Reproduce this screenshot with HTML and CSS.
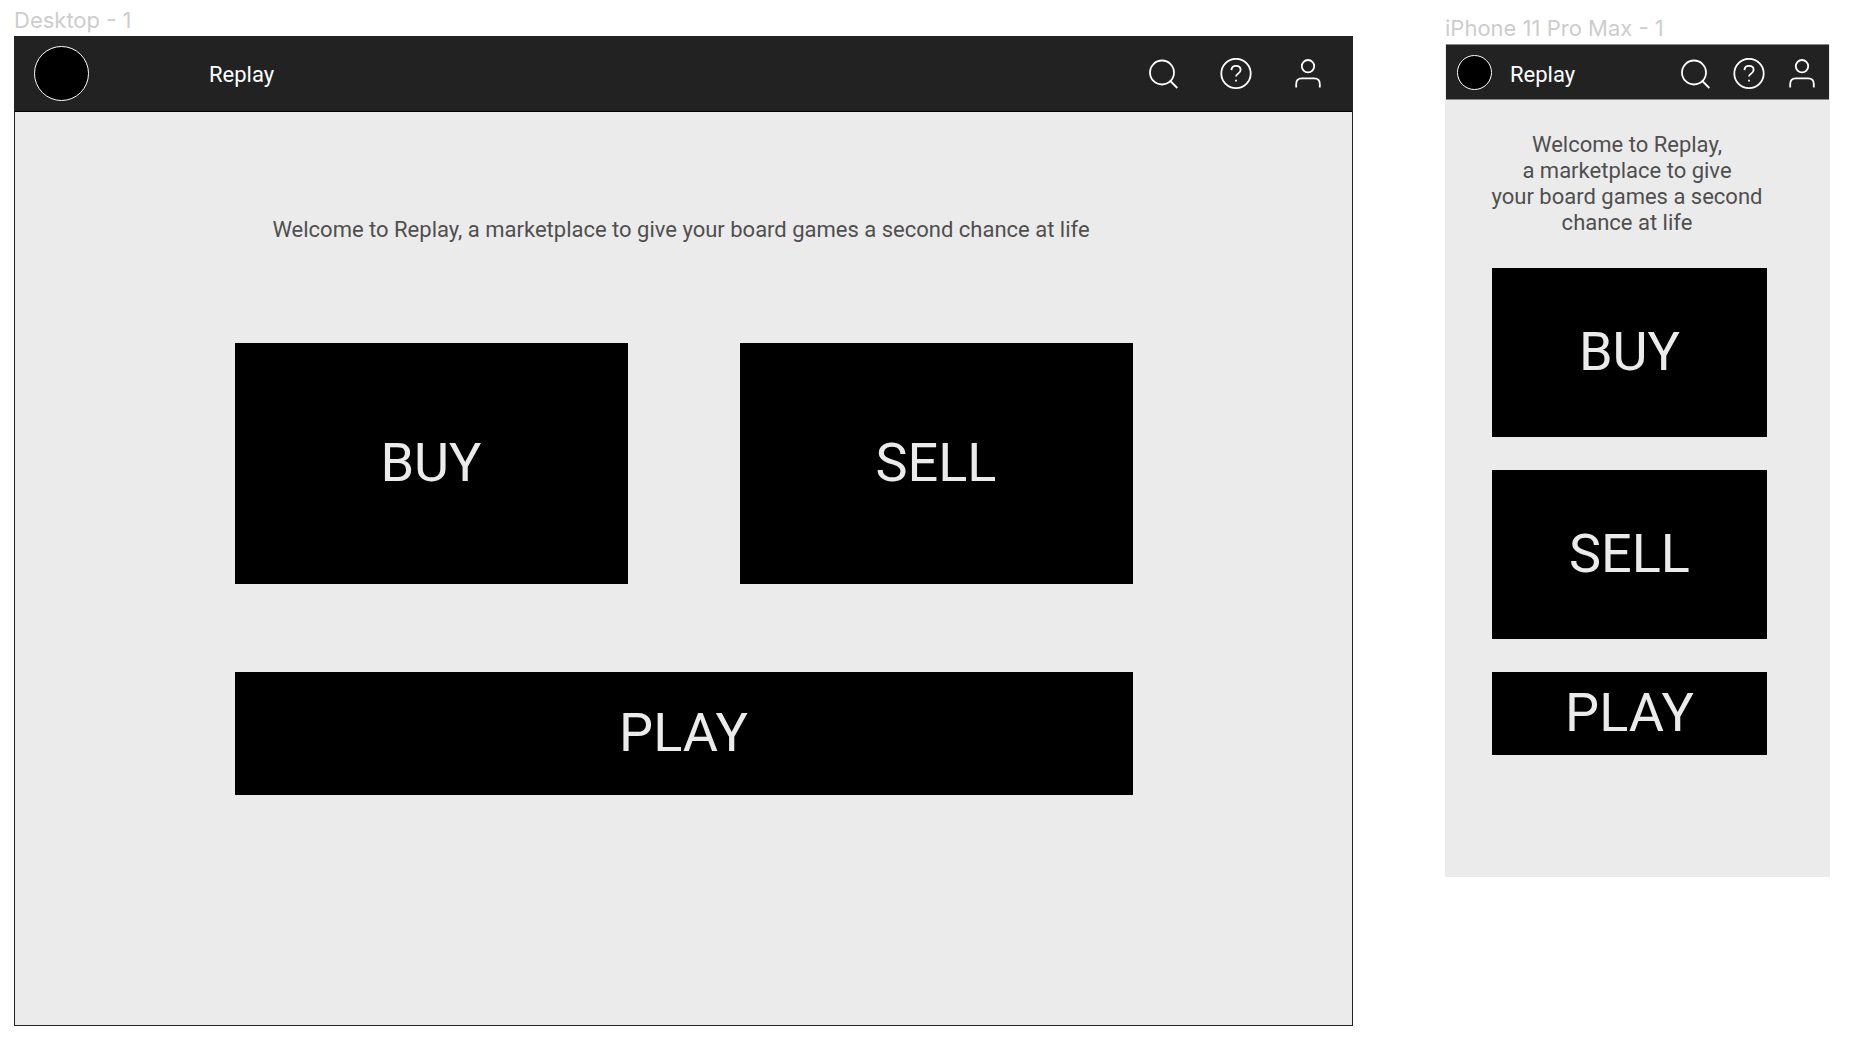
FILE: index.html
```html
<!DOCTYPE html>
<html lang="en">
<head>
<meta charset="utf-8">
<title>Replay</title>
<link rel="stylesheet" href="styles.css">
</head>
<body>
<svg class="sprite" aria-hidden="true">
  <symbol id="search" viewBox="0 0 32 32"><circle cx="14" cy="14.500" r="12"/><path d="M22.300 23l7 7"/></symbol>
  <symbol id="help" viewBox="0 0 32 32"><circle cx="16" cy="15.500" r="14.700"/><path d="M11.400 12.100c.2-2.600 2-4.200 4.600-4.200 2.700 0 4.600 1.700 4.600 4.100 0 3.600-4.600 3.600-4.600 6.600M16 21.800v1.800"/></symbol>
  <symbol id="user" viewBox="0 0 32 32"><circle cx="16" cy="8.200" r="6.200"/><path d="M4.200 29.400v-3.500c0-3.400 2-5.600 5.500-5.600h12.600c3.500 0 5.500 2.200 5.500 5.600v3.500"/></symbol>
</svg>
<div class="board">
  <section class="artboard desktop">
    <h2 class="label">Desktop - 1</h2>
    <div class="frame">
      <header class="bar">
        <span class="logo"></span>
        <span class="brand">Replay</span>
        <nav class="tools">
          <button class="tool" aria-label="Search"><svg class="icon"><use href="#search"/></svg></button>
          <button class="tool" aria-label="Help"><svg class="icon"><use href="#help"/></svg></button>
          <button class="tool" aria-label="Account"><svg class="icon"><use href="#user"/></svg></button>
        </nav>
      </header>
      <main class="content">
        <p class="welcome">Welcome to Replay, a marketplace to give your board games a second chance at life</p>
        <div class="cards">
          <button class="card">BUY</button>
          <button class="card">SELL</button>
          <button class="card play">PLAY</button>
        </div>
      </main>
    </div>
  </section>
  <section class="artboard mobile">
    <h2 class="label">iPhone 11 Pro Max - 1</h2>
    <div class="frame">
      <header class="bar">
        <span class="logo"></span>
        <span class="brand">Replay</span>
        <nav class="tools">
          <button class="tool" aria-label="Search"><svg class="icon"><use href="#search"/></svg></button>
          <button class="tool" aria-label="Help"><svg class="icon"><use href="#help"/></svg></button>
          <button class="tool" aria-label="Account"><svg class="icon"><use href="#user"/></svg></button>
        </nav>
      </header>
      <div class="content">
        <p class="welcome">Welcome to Replay,<br>a marketplace to give<br>your board games a second<br>chance at life</p>
        <div class="cards">
          <button class="card">BUY</button>
          <button class="card">SELL</button>
          <button class="card play">PLAY</button>
        </div>
      </div>
    </div>
  </section>
</div>
</body>
</html>
```
FILE: styles.css
```css
* { box-sizing: border-box; }

body {
  margin: 0;
  background: #fff;
  font-family: Roboto, sans-serif;
  font-size: 22px;
  line-height: 26px;
}

.sprite { display: none; }

.board {
  display: grid;
  grid-template-columns: 1339fr 385fr;
  gap: 92px;
  align-items: start;
  padding: 8px 32px 24px 14px;
}

.mobile { padding-top: 8px; }

.label {
  margin: 0 0 4px;
  font: 400 22px/24px Inter, sans-serif;
  color: #cdcdcd;
}

.frame { background: #ebebeb; }

.desktop .frame {
  border: 1px solid #222;
  border-top: 0;
}

.bar {
  display: flex;
  align-items: center;
  background: #222;
  color: #fff;
}

.desktop .bar {
  height: 76px;
  padding: 0 28px 0 19px;
  border-bottom: 1px solid #000;
}

.mobile .bar {
  height: 56px;
  margin: 0 1px;
  padding: 0 11px 0 11px;
  border: solid #8a8686;
  border-width: 1px 0;
}

.logo {
  width: 55px;
  height: 55px;
  border: 1px solid #fff;
  border-radius: 50%;
  background: #000;
}

.mobile .logo {
  width: 35px;
  height: 35px;
}

.brand {
  padding-top: 3px;
  margin-left: 120px;
}

.mobile .brand {
  padding-top: 6px;
  margin-left: 18px;
}

.tools {
  display: flex;
  gap: 40px;
  margin-left: auto;
}

.mobile .tools {
  gap: 21px;
  padding-top: 3px;
}

.tool {
  display: block;
  padding: 0;
  border: 0;
  background: none;
  color: inherit;
}

.icon {
  display: block;
  width: 32px;
  height: 32px;
  fill: none;
  stroke: currentColor;
  stroke-width: 1.8;
}

.desktop .content { padding: 105px 48px 230px; }
.mobile .content { padding: 32px 63px 122px 47px; }

.welcome {
  margin: 0 0 100px;
  padding-right: 5px;
  text-align: center;
  color: #4f4f4f;
}

.mobile .welcome {
  margin: 0 -8px 32px;
  white-space: nowrap;
}

.cards {
  display: grid;
  grid-template-columns: 1fr 1fr;
  gap: 88px 112px;
  max-width: 898px;
  margin: 0 auto;
}

.mobile .cards {
  grid-template-columns: 1fr;
  gap: 33px;
}

.card {
  height: 241px;
  padding: 0 0 2px;
  border: 0;
  background: #000;
  color: #ebebeb;
  font: 400 54px/64px Roboto, sans-serif;
}

.play {
  grid-column: 1 / -1;
  height: 123px;
}

.mobile .card { height: 169px; }
.mobile .play { height: 83px; }
```
